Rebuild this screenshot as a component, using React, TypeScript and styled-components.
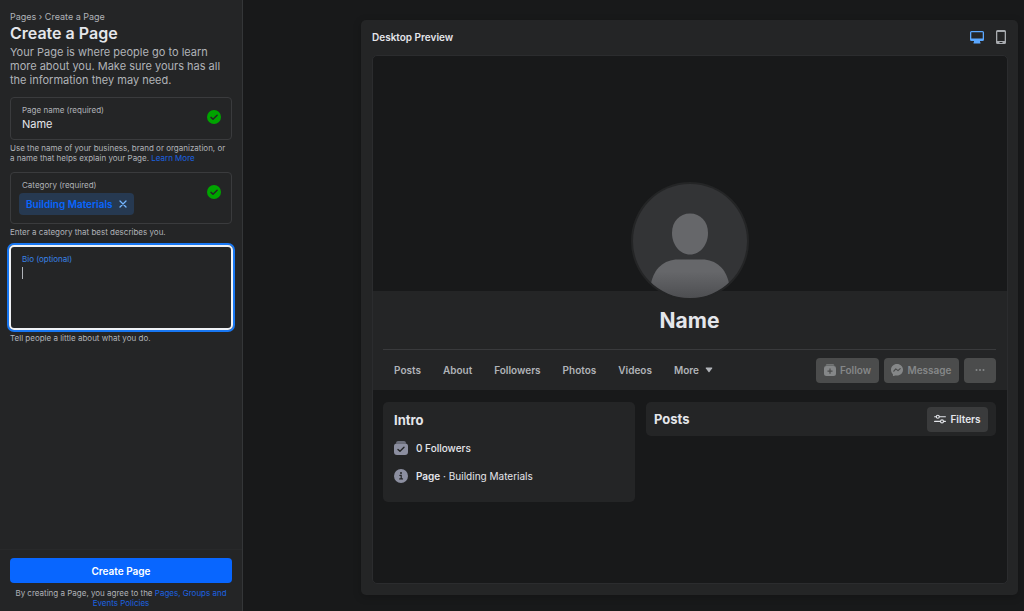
import React, { useId, useState } from "react";
import styled, { createGlobalStyle } from "styled-components";

const GlobalStyle = createGlobalStyle`
  *, *::before, *::after { box-sizing: border-box; }
  body {
    margin: 0;
    background: #18191a;
    color: #e4e6eb;
    font-family: Inter, "Liberation Sans", sans-serif;
    font-size: 11px;
  }
  h1, h2, h3, p, ul { margin: 0; padding: 0; }
  button, input, textarea { font-family: inherit; }
`;

const Layout = styled.div`
  display: flex;
  min-height: 100vh;
`;

/* ---------- Sidebar ---------- */

const Sidebar = styled.aside`
  flex: 0 0 243px;
  display: flex;
  flex-direction: column;
  background: #242526;
  border-right: 1px solid #343638;
`;

const Form = styled.form`
  flex: 1;
  display: flex;
  flex-direction: column;
  padding: 11px 10px 0;
`;

const Breadcrumb = styled.nav`
  color: #b0b3b8;
  font-size: 9px;
  line-height: 12px;
`;

const Crumb = styled.a`
  color: inherit;
  text-decoration: none;
`;

const PageTitle = styled.h1`
  font-size: 16px;
  line-height: 20px;
  font-weight: 600;
`;

const Description = styled.p`
  padding-top: 2px;
  color: #b0b3b8;
  font-size: 11px;
  line-height: 14px;
`;

const Field = styled.div<{ $gap: number }>`
  position: relative;
  display: flex;
  flex-direction: column;
  margin-top: ${(p) => p.$gap}px;
  padding: 7px 11px 6px;
  border: 1px solid #3a3b3d;
  border-radius: 4px;
`;

const BioField = styled(Field)`
  height: 85px;
  margin-left: -1px;
  margin-right: -1px;
  padding: 7px 11px;
  border: 2px solid #f0f2f5;
  border-radius: 5px;
  box-shadow: 0 0 0 2px #1877f2;
`;

const FieldLabel = styled.label<{ $active?: boolean }>`
  color: ${(p) => (p.$active ? "#3982e4" : "#b0b3b8")};
  font-size: 8px;
  line-height: 10px;
`;

const TextInput = styled.input`
  width: 100%;
  height: 18px;
  padding: 0;
  border: 0;
  outline: 0;
  background: transparent;
  color: #e4e6eb;
  font-size: 11px;
`;

const BioInput = styled.textarea`
  flex: 1;
  width: 100%;
  margin-top: 3px;
  padding: 0;
  border: 0;
  outline: 0;
  resize: none;
  background: linear-gradient(#b0b3b8, #b0b3b8) 0 0 / 1px 12px no-repeat;
  caret-color: transparent;
  color: #e4e6eb;
  font-size: 11px;
`;

const ValidMark = styled.svg`
  position: absolute;
  top: 12px;
  right: 10px;
  width: 14px;
  height: 14px;
`;

const Help = styled.p`
  padding: 3px 4px 0 0;
  color: #b0b3b8;
  font-size: 8px;
  line-height: 10px;
`;

const LegalText = styled(Help)`
  padding: 5px 0 0;
`;

const TextLink = styled.a`
  color: #1b62e0;
  text-decoration: none;
`;

const Chip = styled.span`
  display: flex;
  align-items: center;
  align-self: flex-start;
  gap: 6px;
  height: 22px;
  margin: 3px 0 2px -3px;
  padding: 0 7px;
  border-radius: 4px;
  background: #263951;
  color: #0866ff;
  font-size: 10px;
  font-weight: 600;
`;

const ChipRemove = styled.button`
  display: flex;
  padding: 0;
  border: 0;
  background: none;
  color: #75b6ff;
`;

const SidebarFooter = styled.footer`
  padding: 8px 10px 3px;
  border-top: 1px solid #28292a;
  text-align: center;
`;

const SubmitButton = styled.button`
  width: 100%;
  height: 25px;
  border: 0;
  border-radius: 4px;
  background: #0866ff;
  color: #fff;
  font-size: 10px;
  font-weight: 600;
`;

/* ---------- Preview ---------- */

const Main = styled.main`
  flex: 1;
  display: flex;
  min-width: 0;
  padding: 20px 6px 16px 118px;
`;

const PreviewCard = styled.section`
  flex: 1;
  display: flex;
  flex-direction: column;
  min-width: 0;
  padding: 0 10px 11px 11px;
  border-radius: 5px;
  background: #242526;
  box-shadow: 0 2px 8px rgba(0, 0, 0, 0.2);
`;

const PreviewHeader = styled.header`
  display: flex;
  align-items: center;
  justify-content: space-between;
  height: 35px;
  padding-bottom: 1px;
`;

const PreviewTitle = styled.h2`
  font-size: 10px;
  line-height: 14px;
  font-weight: 600;
`;

const DeviceSwitch = styled.div`
  display: flex;
  align-items: center;
  gap: 10px;
`;

const DeviceButton = styled.button<{ $active?: boolean }>`
  display: flex;
  padding: 0;
  border: 0;
  background: none;
  color: ${(p) => (p.$active ? "#5aa7ff" : "#a8abaf")};
`;

const Viewport = styled.div`
  flex: 1;
  display: flex;
  flex-direction: column;
  border: 1px solid #2b2c2e;
  border-radius: 5px;
  background: #18191a;
  overflow: hidden;
`;

const Cover = styled.div`
  position: relative;
  z-index: 1;
  display: flex;
  justify-content: center;
  align-items: flex-end;
  height: 235px;
`;

const Avatar = styled.svg`
  width: 118px;
  height: 118px;
  margin-bottom: -9px;
`;

const Profile = styled.div`
  display: flex;
  flex-direction: column;
  padding: 0 11px 0 10px;
  background: #242526;
`;

const ProfileName = styled.h1`
  padding: 14px 0 13px;
  font-size: 21px;
  line-height: 31px;
  font-weight: 700;
  text-align: center;
`;

const ProfileBar = styled.div`
  display: flex;
  align-items: center;
  justify-content: space-between;
  height: 41px;
  border-top: 1px solid #393a3c;
`;

const Tabs = styled.nav`
  display: flex;
  gap: 22px;
  padding-left: 11px;
`;

const Tab = styled.a`
  display: flex;
  align-items: center;
  gap: 6px;
  color: #b0b3b8;
  font-size: 10px;
  line-height: 14px;
  font-weight: 600;
  text-decoration: none;
`;

const Actions = styled.div`
  display: flex;
  gap: 5px;
`;

const ActionButton = styled.button<{ $width: number }>`
  display: flex;
  align-items: center;
  justify-content: center;
  gap: 4px;
  width: ${(p) => p.$width}px;
  height: 25px;
  padding: 0;
  border: 0;
  border-radius: 4px;
  background: #4b4c4c;
  color: #858788;
  font-size: 10px;
  font-weight: 600;
`;

const Body = styled.div`
  display: grid;
  grid-template-columns: 252fr 350fr;
  align-items: start;
  gap: 11px;
  padding: 12px 11px 12px 10px;
`;

const Panel = styled.section`
  border-radius: 5px;
  background: #242526;
`;

const IntroPanel = styled(Panel)`
  padding: 8px 11px 12px;
`;

const PostsPanel = styled(Panel)`
  display: flex;
  align-items: center;
  justify-content: space-between;
  height: 34px;
  padding: 0 8px;
`;

const PanelTitle = styled.h2`
  font-size: 13px;
  line-height: 20px;
  font-weight: 700;
`;

const Facts = styled.ul`
  padding-top: 4px;
  list-style: none;
`;

const Fact = styled.li`
  display: flex;
  align-items: center;
  gap: 8px;
  height: 28px;
  font-size: 10px;
  line-height: 14px;
`;

const Strong = styled.strong<{ $medium?: boolean }>`
  font-weight: ${(p) => (p.$medium ? 500 : 600)};
`;

const FilterButton = styled(ActionButton)`
  background: #3a3b3c;
  color: #e4e6eb;
`;

/* ---------- Icons ---------- */

const CheckMark = () => (
  <ValidMark viewBox="0 0 14 14" role="img" aria-label="Valid">
    <circle cx="7" cy="7" r="7" fill="#00a400" />
    <path d="M4 7.4 6 9.3 10.1 5.2" fill="none" stroke="#242526" strokeWidth="1.5" strokeLinecap="round" strokeLinejoin="round" />
  </ValidMark>
);

const CloseIcon = () => (
  <svg width="8" height="8" viewBox="0 0 8 8" aria-hidden="true">
    <path d="M1 1 7 7M7 1 1 7" stroke="currentColor" strokeWidth="1.3" strokeLinecap="round" />
  </svg>
);

const DesktopIcon = () => (
  <svg width="14" height="14" viewBox="0 0 14 14" aria-hidden="true">
    <path
      fillRule="evenodd"
      d="M1.5 1h11A1.5 1.5 0 0 1 14 2.5v7a1.5 1.5 0 0 1-1.500 1.500H10v1l.5.6v.9h-7v-.9l.5-.6v-1H1.500A1.500 1.500 0 0 1 0 9.500v-7A1.500 1.500 0 0 1 1.500 1ZM1.300 2.300v6.200h11.400V2.300Z"
      fill="currentColor"
    />
  </svg>
);

const PhoneIcon = () => (
  <svg width="14" height="14" viewBox="0 0 14 14" aria-hidden="true">
    <path
      fillRule="evenodd"
      d="M3.500 0h7A1.500 1.500 0 0 1 12 1.500v11a1.500 1.500 0 0 1-1.500 1.500h-7A1.500 1.500 0 0 1 2 12.500v-11A1.500 1.500 0 0 1 3.500 0ZM3.300 2v9h7.400V2ZM5.500 12v1h3v-1Z"
      fill="currentColor"
    />
  </svg>
);

const AvatarArt = () => (
  <Avatar viewBox="0 0 118 118" role="img" aria-label="Profile picture">
    <defs>
      <linearGradient id="torso" x1="0" y1="0" x2="0" y2="1">
        <stop offset="0.3" stopColor="#66676a" />
        <stop offset="1" stopColor="#4c4d50" />
      </linearGradient>
      <clipPath id="disc">
        <circle cx="59" cy="59" r="57" />
      </clipPath>
    </defs>
    <circle cx="59" cy="59" r="59" fill="#242526" />
    <circle cx="59" cy="59" r="57" fill="#333436" />
    <g clipPath="url(#disc)">
      <path d="M59 31.500c10.500 0 18 8 18 19.500 0 11.500-7.500 21.500-18 21.500s-18-10-18-21.500c0-11.500 7.500-19.500 18-19.500Z" fill="#66676a" />
      <path d="M47 77.500h24c14 0 24 9 27 24v16H20v-16c3-15 13-24 27-24Z" fill="url(#torso)" />
    </g>
  </Avatar>
);

const CaretDown = () => (
  <svg width="8" height="6" viewBox="0 0 8 6" aria-hidden="true">
    <path d="M1.200.5h5.600q.8 0 .4.700L4.500 5q-.5.600-1 0L.8 1.200Q.4.500 1.200.5Z" fill="currentColor" />
  </svg>
);

const FollowIcon = () => (
  <svg width="12" height="12" viewBox="0 0 12 12" aria-hidden="true">
    <path d="M3 0h6q1.200 0 1.500 1.800h-9Q1.800 0 3 0Z" fill="currentColor" opacity="0.7" />
    <path
      fillRule="evenodd"
      d="M2.300 2h7.400A2.300 2.300 0 0 1 12 4.300V9.500A2.500 2.500 0 0 1 9.500 12h-7A2.500 2.500 0 0 1 0 9.500V4.300A2.300 2.300 0 0 1 2.300 2ZM5.400 4.500v2H3.500v1.200h1.900v2h1.200v-2h1.900V6.500H6.600v-2Z"
      fill="currentColor"
    />
  </svg>
);

const MessengerIcon = () => (
  <svg width="12" height="12" viewBox="0 0 12 12" aria-hidden="true">
    <path d="M6 0c3.400 0 6 2.500 6 5.800s-2.600 5.800-6 5.800c-.6 0-1.200-.1-1.700-.2L2.700 12c-.4.200-.8-.1-.8-.5V10.200C.7 9.200 0 7.600 0 5.800 0 2.500 2.600 0 6 0Z" fill="currentColor" />
    <path d="M2.800 7.200 4.800 4.900 7 6.600 9.200 4.600" fill="none" stroke="#4b4c4c" strokeWidth="1.200" strokeLinecap="round" strokeLinejoin="round" />
  </svg>
);

const DotsIcon = () => (
  <svg width="10" height="4" viewBox="0 0 10 4" fill="currentColor" aria-hidden="true">
    <circle cx="1.500" cy="2" r="1" />
    <circle cx="5" cy="2" r="1" />
    <circle cx="8.500" cy="2" r="1" />
  </svg>
);

const FiltersIcon = () => (
  <svg width="12" height="10" viewBox="0 0 12 10" fill="none" stroke="currentColor" strokeWidth="1.100" strokeLinecap="round" aria-hidden="true">
    <path d="M.6 2.800h1.600M5.400 2.800h6M.6 7.400h5.600M9.600 7.400h1.800" />
    <circle cx="3.800" cy="2.800" r="1.500" />
    <circle cx="8" cy="7.400" r="1.500" />
  </svg>
);

const FollowersIcon = () => (
  <svg width="14" height="14" viewBox="0 0 14 14" aria-hidden="true">
    <path d="M4 0h6q1.700 0 2.200 2.400H1.800Q2.300 0 4 0Z" fill="#6c6f7b" />
    <path d="M2.800 2.400h8.400A2.800 2.800 0 0 1 14 5.200V11a3 3 0 0 1-3 3H3a3 3 0 0 1-3-3V5.200a2.800 2.800 0 0 1 2.800-2.800Z" fill="#8c8fa0" />
    <path d="M4 8.400 6 10.300 10 6.300" fill="none" stroke="#242526" strokeWidth="1.400" strokeLinecap="round" strokeLinejoin="round" />
  </svg>
);

const InfoIcon = () => (
  <svg width="14" height="14" viewBox="0 0 14 14" aria-hidden="true">
    <circle cx="7" cy="7" r="7" fill="#8c8fa0" />
    <circle cx="7" cy="4" r="1" fill="#242526" />
    <path d="M5.900 6.400H7.200V9.800M5.700 9.900h2.800" fill="none" stroke="#242526" strokeWidth="1.200" strokeLinecap="round" />
  </svg>
);

/* ---------- Page ---------- */

const TABS = ["Posts", "About", "Followers", "Photos", "Videos"];

export default function App() {
  const [name, setName] = useState("Name");
  const [bio, setBio] = useState("");
  const nameId = useId();
  const bioId = useId();

  return (
    <>
      <GlobalStyle />
      <Layout>
        <Sidebar>
          <Form id="create-page" onSubmit={(e) => e.preventDefault()}>
            <Breadcrumb aria-label="Breadcrumb">
              <Crumb href="#pages">Pages</Crumb> › <Crumb href="#create">Create a Page</Crumb>
            </Breadcrumb>
            <PageTitle>Create a Page</PageTitle>
            <Description>
              Your Page is where people go to learn more about you. Make sure yours has all the information they may need.
            </Description>

            <Field $gap={10}>
              <FieldLabel htmlFor={nameId}>Page name (required)</FieldLabel>
              <TextInput id={nameId} value={name} onChange={(e) => setName(e.target.value)} />
              <CheckMark />
            </Field>
            <Help>
              Use the name of your business, brand or organization, or a name that helps explain your Page.{" "}
              <TextLink href="#learn-more">Learn More</TextLink>
            </Help>

            <Field $gap={9}>
              <FieldLabel as="span">Category (required)</FieldLabel>
              <Chip>
                Building Materials
                <ChipRemove type="button" aria-label="Remove Building Materials">
                  <CloseIcon />
                </ChipRemove>
              </Chip>
              <CheckMark />
            </Field>
            <Help>Enter a category that best describes you.</Help>

            <BioField $gap={8}>
              <FieldLabel htmlFor={bioId} $active>
                Bio (optional)
              </FieldLabel>
              <BioInput id={bioId} value={bio} onChange={(e) => setBio(e.target.value)} />
            </BioField>
            <Help>Tell people a little about what you do.</Help>
          </Form>

          <SidebarFooter>
            <SubmitButton type="submit" form="create-page">
              Create Page
            </SubmitButton>
            <LegalText>
              By creating a Page, you agree to the <TextLink href="#policies">Pages, Groups and Events Policies</TextLink>
            </LegalText>
          </SidebarFooter>
        </Sidebar>

        <Main>
          <PreviewCard>
            <PreviewHeader>
              <PreviewTitle>Desktop Preview</PreviewTitle>
              <DeviceSwitch>
                <DeviceButton type="button" aria-label="Desktop" $active>
                  <DesktopIcon />
                </DeviceButton>
                <DeviceButton type="button" aria-label="Mobile">
                  <PhoneIcon />
                </DeviceButton>
              </DeviceSwitch>
            </PreviewHeader>

            <Viewport>
              <Cover>
                <AvatarArt />
              </Cover>
              <Profile>
                <ProfileName>{name}</ProfileName>
                <ProfileBar>
                  <Tabs aria-label="Page sections">
                    {TABS.map((tab) => (
                      <Tab key={tab} href={`#${tab.toLowerCase()}`}>
                        {tab}
                      </Tab>
                    ))}
                    <Tab href="#more">
                      More <CaretDown />
                    </Tab>
                  </Tabs>
                  <Actions>
                    <ActionButton type="button" disabled $width={63}>
                      <FollowIcon /> Follow
                    </ActionButton>
                    <ActionButton type="button" disabled $width={75}>
                      <MessengerIcon /> Message
                    </ActionButton>
                    <ActionButton type="button" disabled $width={32} aria-label="More actions">
                      <DotsIcon />
                    </ActionButton>
                  </Actions>
                </ProfileBar>
              </Profile>

              <Body>
                <IntroPanel>
                  <PanelTitle>Intro</PanelTitle>
                  <Facts>
                    <Fact>
                      <FollowersIcon />
                      <Strong $medium>0 Followers</Strong>
                    </Fact>
                    <Fact>
                      <InfoIcon />
                      <span>
                        <Strong>Page</Strong> · Building Materials
                      </span>
                    </Fact>
                  </Facts>
                </IntroPanel>
                <PostsPanel>
                  <PanelTitle>Posts</PanelTitle>
                  <FilterButton type="button" $width={61}>
                    <FiltersIcon /> Filters
                  </FilterButton>
                </PostsPanel>
              </Body>
            </Viewport>
          </PreviewCard>
        </Main>
      </Layout>
    </>
  );
}
